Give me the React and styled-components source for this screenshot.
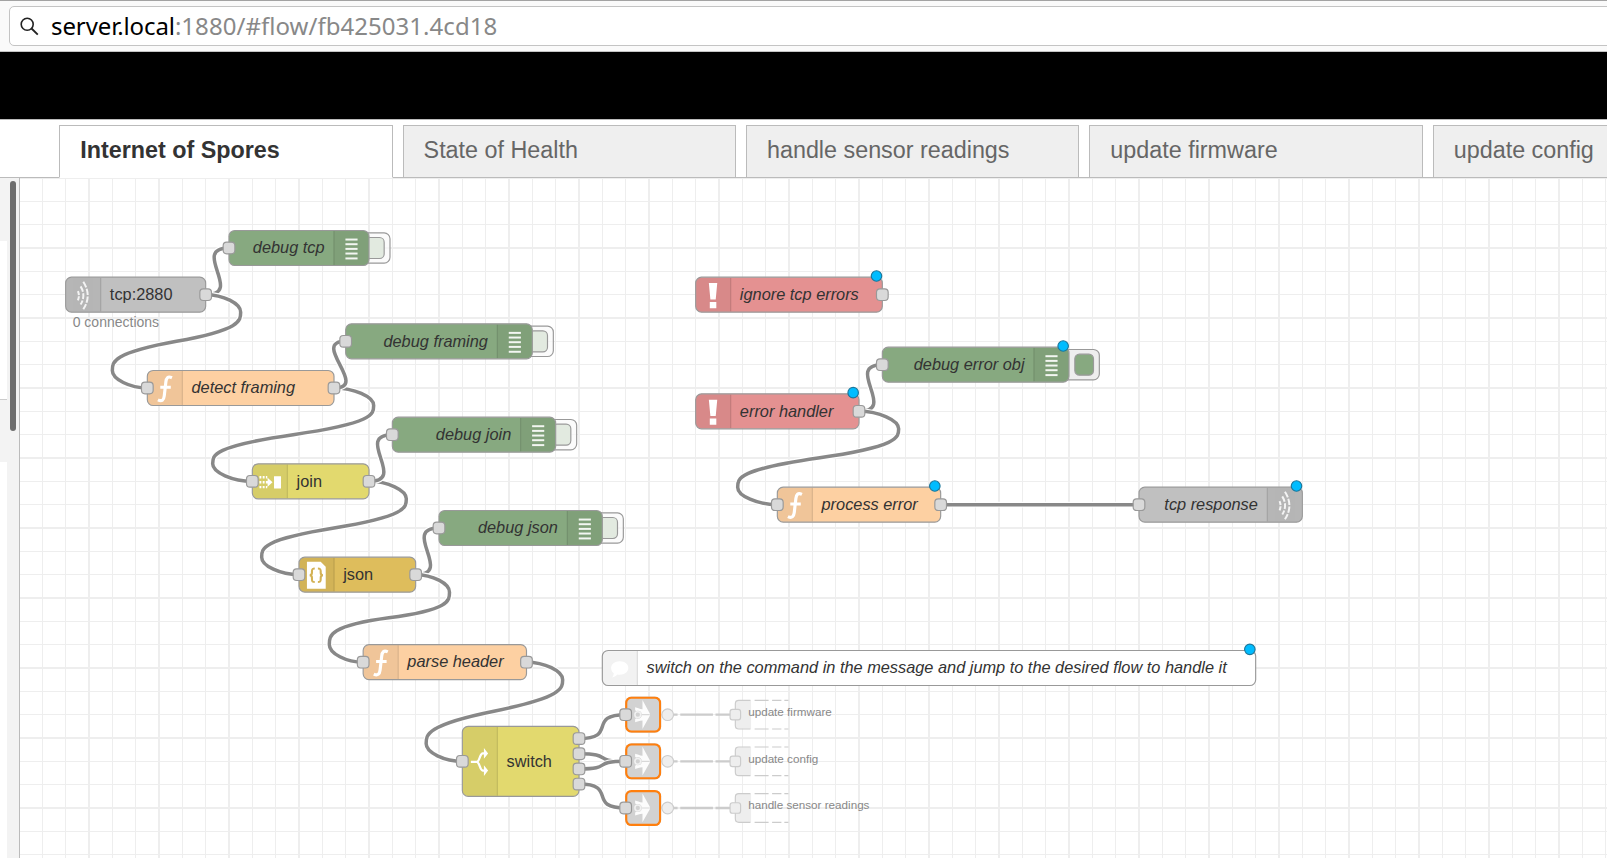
import React from "react";
import styled, { createGlobalStyle } from "styled-components";

const GlobalStyle = createGlobalStyle`
  * { box-sizing: border-box; }
  html, body { margin: 0; padding: 0; overflow: hidden; background: #fff; }
  body { font-family: "Liberation Sans", Arial, sans-serif; }
`;

const SCALE = 7 / 6;

/* ---------- page chrome ---------- */

const Page = styled.div`
  width: 100vw;
  height: 858px;
  display: flex;
  flex-direction: column;
  overflow: hidden;
`;

const AddressBar = styled.div`
  flex: none;
  height: 52px;
  padding: 5px 0 6px 9px;
  background: #fafafa;
  border-top: 1px solid #a3a3a3;
  border-bottom: 1px solid #c4c4c4;
`;

const AddressField = styled.div`
  height: 40px;
  width: 1640px;
  display: flex;
  align-items: center;
  padding-left: 10px;
  background: #fff;
  border: 1px solid #c4c4c4;
  border-radius: 5px;
`;

const AddressText = styled.div`
  margin-left: 12px;
  padding-bottom: 1px;
  font-family: "Noto Sans", sans-serif;
  font-size: 24px;
  line-height: 37px;
  letter-spacing: 0.04px;
  white-space: pre;
  color: #888;
  b { font-weight: 400; color: #000; letter-spacing: -0.1px; }
`;

const HeaderBar = styled.div`
  flex: none;
  height: 67px;
  background: #000;
`;

const TabStrip = styled.div`
  flex: none;
  height: 59px;
  display: flex;
  align-items: flex-end;
  gap: 10px;
  padding-left: 59.3px;
  border-top: 1px solid #bbb;
  box-shadow: inset 0 -1px 0 #bbb;
  overflow: hidden;
`;

const Tab = styled.div`
  flex: none;
  width: 333.4px;
  height: 53px;
  padding: 1px 0 0 19.9px;
  line-height: 47px;
  font-size: 23.33px;
  white-space: nowrap;
  border: 1px solid #bbb;
  border-bottom-color: ${(p) => (p.$active ? "#fff" : "#bbb")};
  background: ${(p) => (p.$active ? "#fff" : "#efefef")};
  color: ${(p) => (p.$active ? "#333" : "#666")};
  font-weight: ${(p) => (p.$active ? 700 : 400)};
`;

const Main = styled.div`
  flex: 1;
  min-height: 0;
  display: flex;
`;

const Palette = styled.div`
  flex: none;
  width: 20px;
  display: flex;
  background: #fff;
  border-right: 1px solid #bbb;
`;

const PaletteEdge = styled.div`
  width: 7px;
  display: flex;
  flex-direction: column;
`;

const PaletteHeading = styled.div`
  height: ${(p) => p.$h}px;
  background: #f3f3f3;
`;

const PaletteBody = styled.div`
  height: 159px;
  background: #fff;
  border-bottom: 1px solid #ccc;
`;

const ScrollTrack = styled.div`
  flex: 1;
  padding: 3px 3px 0 3px;
  background: #f3f3f3;
`;

const ScrollThumb = styled.div`
  height: 250px;
  border-radius: 3px;
  background: #6e6e6e;
`;

/* ---------- flow canvas ---------- */

const Chart = styled.div`
  flex: 1;
  position: relative;
  overflow: hidden;
  background: #fff;
`;

const Stage = styled.div`
  position: absolute;
  left: -1px;
  top: 0;
  width: 1380px;
  height: 600px;
  transform: scale(${SCALE});
  transform-origin: 0 0;
`;

const Layer = styled.svg`
  position: absolute;
  left: 0;
  top: 0;
  width: 1380px;
  height: 600px;
  overflow: visible;
`;

/* Node outlines are centred on whole units, so the boxes sit half a unit out. */
const NodeLayer = styled.div`
  transform: translate(-0.5px, -0.5px);
`;

const NodeRoot = styled.div`
  position: absolute;
  left: ${(p) => p.$x}px;
  top: ${(p) => p.$y - p.$h / 2}px;
  width: ${(p) => p.$w + 1}px;
  height: ${(p) => p.$h + 1}px;
`;

const NodeBody = styled.div`
  position: relative;
  width: 100%;
  height: 100%;
  display: flex;
  flex-direction: ${(p) => (p.$right ? "row-reverse" : "row")};
  align-items: stretch;
  overflow: hidden;
  border-radius: 5.5px;
  border: 1px solid #999;
  background: ${(p) => p.$color};
`;

const LinkBody = styled.div`
  width: 100%;
  height: 100%;
  border-radius: 5.5px;
  background: #d2d2d2;
  box-shadow: inset 0 0 0 1.9px #ff7f0e;
  svg { display: block; }
`;

const IconPane = styled.div`
  flex: none;
  width: 30px;
  display: flex;
  align-items: center;
  justify-content: center;
  background: rgba(0, 0, 0, 0.05);
  border-${(p) => (p.$right ? "left" : "right")}: 1px solid rgba(0, 0, 0, 0.1);
  svg { flex: none; display: block; transform: translateX(-0.6px); }
`;

const Label = styled.div`
  flex: 1;
  display: flex;
  align-items: center;
  justify-content: ${(p) => (p.$right ? "flex-end" : "flex-start")};
  padding: 0 7.6px 1.6px 7.4px;
  font-size: 14px;
  font-style: ${(p) => (p.$italic ? "italic" : "normal")};
  color: #333;
  white-space: nowrap;
`;

const Port = styled.div`
  position: absolute;
  left: 0;
  top: 0;
  width: 11px;
  height: 11px;
  transform: translate(${(p) => p.$x - 5}px, ${(p) => p.$y - 5}px);
  border: 1px solid #999;
  border-radius: 3.5px;
  background: #d9d9d9;
`;

const ChangedDot = styled.div`
  position: absolute;
  right: 1px;
  top: -5px;
  width: 10px;
  height: 10px;
  transform: translate(0.5px, -0.5px);
  border: 1px solid #1c779b;
  border-radius: 50%;
  background: #00bcff;
`;

const ToggleFrame = styled.div`
  position: absolute;
  right: ${(p) => (p.$on ? -26 : -18)}px;
  top: 2px;
  width: 33px;
  height: 27px;
  display: flex;
  align-items: center;
  justify-content: flex-end;
  padding-right: 4px;
  border: 1px solid #999;
  border-radius: 5.5px;
  background: ${(p) => (p.$on ? "#eee" : "rgba(250,250,250,.7)")};
`;

const ToggleFace = styled.div`
  width: 17px;
  height: 19px;
  border: 1px solid #999;
  border-radius: 4.5px;
  background: ${(p) => (p.$on ? "#87a980" : "#e2eae0")};
`;

const Status = styled.div`
  position: absolute;
  left: 6.5px;
  top: 32px;
  font-size: 12px;
  line-height: 14px;
  color: #888;
  white-space: nowrap;
`;

const TargetLabel = styled.div`
  position: absolute;
  left: 625px;
  top: ${(p) => p.$y - 8.3}px;
  font-size: 10px;
  line-height: 12px;
  color: #888;
  white-space: nowrap;
`;

/* ---------- icons, drawn in a 30 x 30 box ---------- */

const icons = {
  tcp: (
    <svg width="30" height="30" fill="none" stroke="#fff" strokeWidth="1.7" opacity=".85">
      <path d="M10.6 11.4q1.7 4 0 8" strokeDasharray="3.6 1" />
      <path d="M12.9 7.4q4.8 7.8 0 15.6" strokeDasharray="5 1.3" />
      <path d="M15.2 3.4q7.6 12 0 23.6" strokeDasharray="5.4 1.3" />
    </svg>
  ),
  function: (
    <svg width="30" height="30" fill="none" stroke="#fff" strokeWidth="2.7">
      <path d="M21.2 5.7C17.6 4 16.4 6 16 9.2L14.6 21.2C14.2 24.8 12.6 26.4 9.2 24.7M11.2 13.9h9" />
    </svg>
  ),
  debug: (
    <svg width="30" height="30" fill="#fff" opacity=".9">
      {[6.4, 10.4, 14.4, 18.4, 22.6].map((y) => (
        <rect key={y} x="9.9" y={y} width="10.4" height="1.7" />
      ))}
    </svg>
  ),
  alert: (
    <svg width="30" height="30" fill="#fff">
      <path d="M11.4 4.6h7.2l-1.3 14h-4.6zM12.2 20.7h5.6v5.4h-5.6z" />
    </svg>
  ),
  join: (
    <svg width="30" height="30" fill="#fff">
      <path d="M6.2 10h1.6v2H6.2zM9 10h1.6v2H9zM6.2 14.2h1.6v2.2H6.2zM9 14.2h1.6v2.2H9zM6.2 18.4h1.6v2H6.2zM9 18.4h1.6v2H9z" />
      <path d="M11.7 10h1.2v2h-1.2zM11.7 18.4h1.2v2h-1.2zM13.2 11.4l4.2 3.9-4.2 3.9zM11.7 14.2h1.8v2.2h-1.8zM18.7 10.2h6v10.4h-6z" />
    </svg>
  ),
  json: (
    <svg width="30" height="30">
      <path d="M6.9 3.4h11.8l4.3 4.4v18.8H6.9z" fill="#fff" />
      <path
        d="M13.6 9.2c-2.2 0-2.4.8-2.4 2.4v1.2c0 1.4-.5 2.1-1.9 2.2c1.4.1 1.9.8 1.9 2.2v1.2c0 1.6.2 2.4 2.4 2.4M16.3 9.2c2.2 0 2.4.8 2.4 2.4v1.2c0 1.4.5 2.1 1.9 2.2c-1.4.1-1.9.8-1.9 2.2v1.2c0 1.6-.2 2.4-2.4 2.4"
        fill="none"
        stroke="#d3b255"
        strokeWidth="1.8"
      />
    </svg>
  ),
  switch: (
    <svg width="30" height="30" fill="none" stroke="#fff" strokeWidth="1.9">
      <path d="M7.4 15h5.4M19 7.7h-1.4C15 7.7 15 15 12.4 15C15 15 15 22.4 17.6 22.4H19" />
      <path d="M18.6 3l3.6 4.7-3.6 4.6zM18.6 17.8l3.6 4.6-3.6 4.6z" fill="#fff" stroke="none" />
    </svg>
  ),
  comment: (
    <svg width="30" height="30" fill="#fff">
      <path d="M15 8.8c4.4 0 7.4 2.5 7.4 5.7s-3 5.7-7.4 5.7c-.7 0-1.4-.1-2-.2c-1.5 1.5-2.8 2.2-4.6 2.6c1-1.2 1.5-2.3 1.5-3.6c-1.5-1-2.3-2.6-2.3-4.4c0-3.2 3-5.8 7.4-5.8z" />
    </svg>
  ),
  link: (
    <svg width="31" height="31">
      <path
        d="M14.9 3L21.2 14.5V16.5L14.9 27.7V20.5C12.2 20.6 10.6 21.7 8.6 22V19.5L12 15.5L8.6 11.5V9.1C10.6 9.4 12.2 10.7 14.9 10.8z"
        fill="#fff"
        opacity=".92"
      />
      <path d="M14 15.5h7" stroke="#d8d8d8" strokeWidth="1" />
      <circle cx="10.9" cy="15.5" r="3.4" fill="#d2d2d2" />
      <circle cx="10.9" cy="15.5" r="2.5" fill="#d2d2d2" stroke="#f1f1f1" strokeWidth="1.3" />
    </svg>
  ),
};

/* ---------- flow data ---------- */

const GREEN = "#87a980";
const ORANGE = "#fdd0a2";
const YELLOW = "#e2d96e";
const RED = "#e49191";
const GREY = "#c0c0c0";

const nodes = [
  { id: "tcpIn", label: "tcp:2880", x: 40, y: 100, w: 120, color: GREY, icon: "tcp", out: 1, plain: true, status: "0 connections" },
  { id: "dbgTcp", label: "debug tcp", x: 180, y: 60, w: 120, color: GREEN, icon: "debug", in: 1, right: true, toggle: "off" },
  { id: "detect", label: "detect framing", x: 110, y: 180, w: 160, color: ORANGE, icon: "function", in: 1, out: 1 },
  { id: "dbgFraming", label: "debug framing", x: 280, y: 140, w: 160, color: GREEN, icon: "debug", in: 1, right: true, toggle: "off" },
  { id: "join", label: "join", x: 200, y: 260, w: 100, color: YELLOW, icon: "join", in: 1, out: 1, plain: true },
  { id: "dbgJoin", label: "debug join", x: 320, y: 220, w: 140, color: GREEN, icon: "debug", in: 1, right: true, toggle: "off" },
  { id: "json", label: "json", x: 240, y: 340, w: 100, color: "#debd5c", icon: "json", in: 1, out: 1, plain: true },
  { id: "dbgJson", label: "debug json", x: 360, y: 300, w: 140, color: GREEN, icon: "debug", in: 1, right: true, toggle: "off" },
  { id: "parse", label: "parse header", x: 295, y: 415, w: 140, color: ORANGE, icon: "function", in: 1, out: 1 },
  { id: "switch", label: "switch", x: 380, y: 500, w: 100, h: 60, color: YELLOW, icon: "switch", in: 1, out: 4, plain: true },
  { id: "ignore", label: "ignore tcp errors", x: 580, y: 100, w: 160, color: RED, icon: "alert", out: 1, changed: true },
  { id: "handler", label: "error handler", x: 580, y: 200, w: 140, color: RED, icon: "alert", out: 1, changed: true },
  { id: "dbgError", label: "debug error obj", x: 740, y: 160, w: 160, color: GREEN, icon: "debug", in: 1, right: true, toggle: "on", changed: true },
  { id: "process", label: "process error", x: 650, y: 280, w: 140, color: ORANGE, icon: "function", in: 1, out: 1, changed: true },
  { id: "tcpOut", label: "tcp response", x: 960, y: 280, w: 140, color: GREY, icon: "tcp", in: 1, right: true, changed: true },
  { id: "comment", label: "switch on the command in the message and jump to the desired flow to handle it", x: 500, y: 420, w: 560, color: "#fff", icon: "comment", changed: true },
  { id: "linkA", x: 520, y: 460, w: 30, icon: "link", in: 1, target: "update firmware" },
  { id: "linkB", x: 520, y: 500, w: 30, icon: "link", in: 1, target: "update config" },
  { id: "linkC", x: 520, y: 540, w: 30, icon: "link", in: 1, target: "handle sensor readings" },
];

const wires = [
  ["tcpIn", 0, "dbgTcp"],
  ["tcpIn", 0, "detect"],
  ["detect", 0, "join"],
  ["detect", 0, "dbgFraming"],
  ["join", 0, "json"],
  ["join", 0, "dbgJoin"],
  ["json", 0, "dbgJson"],
  ["json", 0, "parse"],
  ["parse", 0, "switch"],
  ["switch", 0, "linkA"],
  ["switch", 1, "linkB"],
  ["switch", 2, "linkB"],
  ["switch", 3, "linkC"],
  ["handler", 0, "dbgError"],
  ["handler", 0, "process"],
  ["process", 0, "tcpOut"],
];

const byId = Object.fromEntries(nodes.map((n) => [n.id, n]));
const outOffset = (n, i) => (i - (n.out - 1) / 2) * 13;

function wirePath(ox, oy, dx2, dy2) {
  const W = 100;
  const cp = 15;
  const dx = dx2 - ox;
  const dy = dy2 - oy;
  const dist = Math.hypot(dx, dy);
  if (dx > 0) {
    const s = dist < W ? 0.75 - 0.75 * ((W - dist) / W) : 0.75;
    return `M${ox} ${oy}C${ox + W * s} ${oy} ${dx2 - W * s} ${dy2} ${dx2} ${dy2}`;
  }
  const s = 0.4 - 0.2 * Math.max(0, (W - Math.min(Math.abs(dx), Math.abs(dy))) / W);
  const midX = Math.floor(dx2 - dx / 2);
  const midY = Math.floor(dy2 - dy / 2);
  const y1 = (dy2 + midY) / 2;
  const topX = ox + W * s;
  const topY = Math.min(y1 - dy / 2, oy + cp);
  const botX = dx2 - W * s;
  const botY = Math.max(y1, dy2 - cp);
  const x1 = (ox + topX) / 2;
  const c = [
    [x1, oy],
    [topX, Math.max(oy, topY - cp)],
    [x1, Math.min(midY, topY + cp)],
    [botX, Math.max(midY, botY - cp)],
    [(dx2 + botX) / 2, dy2],
  ];
  if (c[2][1] === topY + cp) {
    if (Math.abs(dy) < cp * 10) {
      c[1][1] = topY - cp / 2;
      c[3][1] = botY - cp / 2;
    }
    c[2][0] = topX;
  }
  return `M${ox} ${oy}C${c[0]} ${c[1]} ${topX} ${topY}S${c[2]} ${midX} ${midY}S${c[3]} ${botX} ${botY}S${c[4]} ${dx2} ${dy2}`;
}

const range = (n) => Array.from({ length: n }, (_, i) => i);

const Grid = () => (
  <Layer stroke="#eee" strokeWidth="1" shapeRendering="crispEdges">
    {range(69).map((i) => <line key={"v" + i} x1={i * 20} x2={i * 20} y1="0" y2="600" />)}
    {range(30).map((i) => <line key={"h" + i} x1="0" x2="1380" y1={i * 20} y2={i * 20} />)}
  </Layer>
);

const Wires = () => (
  <Layer fill="none">
    {wires.map(([a, i, b]) => {
      const s = byId[a];
      const d = wirePath(s.x + s.w, s.y + outOffset(s, i), byId[b].x, byId[b].y);
      return (
        <g key={a + i + b}>
          <path d={d} stroke="#fff" strokeWidth="5" />
          <path d={d} stroke="#888" strokeWidth="3" />
        </g>
      );
    })}
  </Layer>
);

const LinkTargets = () => (
  <Layer fill="none">
    {nodes.filter((n) => n.target).map((n) => (
      <g key={n.id} transform={`translate(0 ${n.y})`} stroke="#ccc">
        <path d="M561 0h3.5M566.8 0h28M597 0h13" strokeWidth="2" />
        <rect x="614" y="-12" width="13.5" height="24" fill="#eee" stroke="none" />
        <path d="M627 -12.3H617q-3 0-3 3V9.3q0 3 3 3H627" strokeWidth="1" />
        <path d="M630.5 -12.3h12M645.5 -12.3h8M656 -12.3h3.5M630.5 12.3h12M645.5 12.3h8M656 12.3h3.5" strokeWidth="1" />
        <circle cx="556" cy="0" r="5" fill="#eee" />
        <rect x="609.5" y="-4.5" width="9" height="9" rx="2" fill="#eee" />
      </g>
    ))}
  </Layer>
);

const FlowNode = ({ n }) => {
  const h = n.h || 30;
  return (
    <NodeRoot $x={n.x} $y={n.y} $w={n.w} $h={h}>
      {n.toggle && (
        <ToggleFrame $on={n.toggle === "on"}>
          <ToggleFace $on={n.toggle === "on"} />
        </ToggleFrame>
      )}
      {n.icon === "link" ? (
        <LinkBody>{icons.link}</LinkBody>
      ) : (
        <NodeBody $color={n.color} $right={n.right}>
          <IconPane $right={n.right}>{icons[n.icon]}</IconPane>
          <Label $right={n.right} $italic={!n.plain}>{n.label}</Label>
        </NodeBody>
      )}
      {n.in && <Port $x={0} $y={h / 2} />}
      {range(n.out || 0).map((i) => (
        <Port key={i} $x={n.w} $y={h / 2 + outOffset(n, i)} />
      ))}
      {n.changed && <ChangedDot />}
      {n.status && <Status>{n.status}</Status>}
    </NodeRoot>
  );
};

const tabs = ["Internet of Spores", "State of Health", "handle sensor readings", "update firmware", "update config"];

export default function App() {
  return (
    <Page>
      <GlobalStyle />
      <AddressBar>
        <AddressField>
          <svg width="19" height="19" viewBox="0 0 19 19" fill="none" stroke="#222" strokeWidth="1.6">
            <circle cx="7.2" cy="7.2" r="6" />
            <path d="M11.5 11.5L17.8 17.6" strokeWidth="1.9" />
          </svg>
          <AddressText><b>server.local</b>:1880/#flow/fb425031.4cd18</AddressText>
        </AddressField>
      </AddressBar>
      <HeaderBar />
      <TabStrip>
        {tabs.map((t, i) => <Tab key={t} $active={i === 0}>{t}</Tab>)}
      </TabStrip>
      <Main>
        <Palette>
          <PaletteEdge>
            <PaletteHeading $h={63} />
            <PaletteBody />
            <PaletteHeading $h={62} />
          </PaletteEdge>
          <ScrollTrack><ScrollThumb /></ScrollTrack>
        </Palette>
        <Chart>
          <Stage>
            <Grid />
            <Wires />
            <LinkTargets />
            <NodeLayer>
              {nodes.map((n) => <FlowNode key={n.id} n={n} />)}
            </NodeLayer>
            {nodes.filter((n) => n.target).map((n) => (
              <TargetLabel key={n.id} $y={n.y}>{n.target}</TargetLabel>
            ))}
          </Stage>
        </Chart>
      </Main>
    </Page>
  );
}
